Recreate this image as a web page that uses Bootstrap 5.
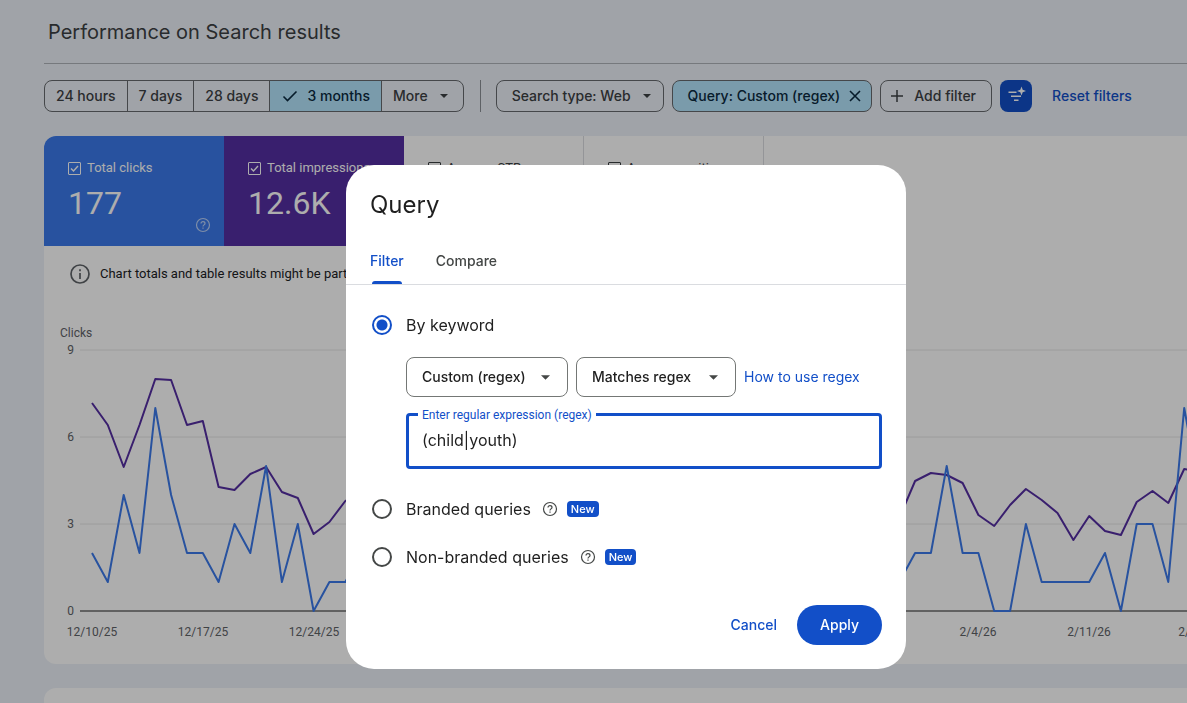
<!DOCTYPE html>
<html lang="en">
<head>
<meta charset="utf-8">
<meta name="viewport" content="width=device-width, initial-scale=1">
<title>Performance on Search results</title>
<link href="https://cdn.jsdelivr.net/npm/bootstrap@5.3.0/dist/css/bootstrap.min.css" rel="stylesheet">
<style>
  :root { --ink: #3c4043; --blue: #124fc8; --line: #66696d; }
  body { background: #ecf1f8; color: var(--ink); font-family: Inter, "Liberation Sans", sans-serif; font-size: 14px; line-height: 20px; overflow: hidden; }
  .page { padding-left: 44px; }
  .page-title { font-size: 20px; line-height: 28px; font-weight: 400; padding: 18px 4px 17px; border-bottom: 1px solid #aeb3b9; }
  .filters { padding: 16px 0 24px; }
  .chip { --bs-btn-color: var(--ink); --bs-btn-border-color: var(--line); --bs-btn-border-radius: 8px;
    --bs-btn-font-size: 14px; --bs-btn-font-weight: 500; --bs-btn-padding-y: 0; --bs-btn-padding-x: 15px;
    --bs-btn-active-bg: #b4e5fc; --bs-btn-active-color: #0b2a40; --bs-btn-active-border-color: var(--line);
    height: 32px; line-height: 20px; display: inline-flex; align-items: center; white-space: nowrap; }
  .ranges .chip { --bs-btn-padding-x: 11px; }
  .chip.has-menu { padding-right: 12px; }
  .chip.has-clear { padding-right: 7px; gap: 6px; }
  .chip.has-plus { padding-left: 7px; gap: 8px; }
  .caret { width: 0; border: 4px solid transparent; border-top-color: currentColor; border-bottom: 0; margin-left: 12px; }
  .vrule { width: 1px; height: 32px; background: #8b9096; margin: 0 15px 0 16px; }
  .smart { width: 32px; height: 32px; border-radius: 8px; background: var(--blue); color: #fff; }
  .blue-link { color: var(--blue); text-decoration: none; font-size: 14px; }
  .reset { font-weight: 500; margin-left: 12px; }
  .panel { background: #fff; border-radius: 12px 0 0 12px; overflow: hidden; }
  .panel, .metric { font-family: Roboto, "Liberation Sans", sans-serif; }
  .metric { width: 180px; height: 110px; padding: 22px 13px 12px 24px; border-right: 1px solid #dadce0; font-size: 13px; }
  .metric.clicks { background: #3b7aeb; color: #fff; border: 0; }
  .metric.impressions { background: #552ea2; color: #fff; border: 0; }
  .metric label { gap: 6px; white-space: nowrap; }
  .metric input { appearance: none; width: 13px; height: 13px; margin: 0; border: 1px solid currentColor; border-radius: 1px; color: inherit; }
  .metric input:checked { background: center/11px url("data:image/svg+xml,%3Csvg xmlns='http://www.w3.org/2000/svg' viewBox='0 0 11 11'%3E%3Cpath d='M2 5.5l2.5 2.5L9 3' fill='none' stroke='white' stroke-width='1.4'/%3E%3C/svg%3E"); }
  .figure-total { font-size: 32px; line-height: 40px; margin-top: 5px; }
  .metric .help { opacity: .65; margin-top: -6px; }
  .notice { padding: 16px 24px; gap: 8px; font-size: 13px; line-height: 24px; color: #202124; }
  .chart { display: block; width: 100%; height: 344px; margin-top: 18px; }
  .chart text { font-size: 12px; fill: #5f6368; }
  .chart polyline { fill: none; stroke-width: 2; stroke-linejoin: round; }
  .next-panel { height: 64px; margin-top: 24px; }

  .modal-backdrop { --bs-backdrop-opacity: .32; }
  .query-modal { padding: 165px 0 0 65px; color: #1f1f1f; }
  .query-modal .modal-dialog { --bs-modal-width: 560px; max-width: 560px; margin: 0 auto; }
  .query-modal .modal-content { border: 0; border-radius: 28px; padding-bottom: 24px; }
  .query-modal h2 { font-size: 24px; line-height: 32px; font-weight: 400; margin: 0; padding: 24px 24px 16px; }
  .tabs { border-bottom: 1px solid #dadce0; padding: 0 24px; gap: 32px; }
  .tabs button { background: none; border: 0; padding: 14px 0 10px; font-weight: 500; color: #444746; }
  .tabs button::after { content: ""; display: block; height: 3px; margin: 10px 2px -10px; border-radius: 3px 3px 0 0; }
  .tabs button.active { color: var(--blue); }
  .tabs button.active::after { background: var(--blue); }
  .choices { padding: 28px 24px 0 26px; font-size: 16px; line-height: 24px; }
  .choices .pick { appearance: none; width: 20px; height: 20px; margin: 0 14px 0 0; border: 2px solid #444746; border-radius: 50%; }
  .choices .pick:checked { border-color: var(--blue); background: radial-gradient(circle, var(--blue) 5px, #fff 6px); }
  .keyword { padding-left: 34px; }
  .picker { height: 40px; border: 1px solid #747775; border-radius: 8px; padding: 0 15px; font-size: 14px; line-height: 20px; font-weight: 500; color: #1f1f1f;
    background-position: right 17px center; background-size: 9px 5px;
    --bs-form-select-bg-img: url("data:image/svg+xml,%3Csvg xmlns='http://www.w3.org/2000/svg' viewBox='0 0 10 5'%3E%3Cpath d='M0 0h10L5 5z' fill='%23444746'/%3E%3C/svg%3E"); }
  .picker.subject { width: 162px; }
  .picker.rule { width: 160px; }
  .expression input { height: 56px; border: 3px solid var(--blue); border-radius: 4px; padding: 0 13px 2px; font-size: 16px; color: #1f1f1f; box-shadow: none; }
  .expression label { left: 12px; top: -8px; padding: 0 4px; background: #fff; color: var(--blue); font-family: Roboto, "Liberation Sans", sans-serif; font-size: 12px; line-height: 20px; }
  .tag-new { background: var(--blue); color: #fff; border-radius: 4px; font-size: 11px; line-height: 16px; font-weight: 500; padding: 0 4px; margin-left: 9px; }
  .query-modal .help { margin-left: 11px; color: #444746; }
  .actions { padding: 36px 24px 0; gap: 8px; }
  .actions button { height: 40px; border: 0; border-radius: 20px; font-weight: 500; color: var(--blue); background: none; padding: 0 12px; }
  .actions .apply { background: var(--blue); color: #fff; padding: 0 23px; }
</style>
</head>
<body>
<svg class="d-none">
  <symbol id="help" viewBox="0 0 16 16"><circle cx="8" cy="8" r="6.5" fill="none" stroke="currentColor" stroke-width="1.2"/><path d="M6 6.6C6 5.3 6.9 4.6 8 4.6s2 .7 2 1.8c0 1.4-2 1.6-2 3.1M8 10.4v1.3" fill="none" stroke="currentColor" stroke-width="1.2"/></symbol>
</svg>

<main class="page">
  <h1 class="page-title m-0">Performance on Search results</h1>

  <div class="filters d-flex align-items-center">
    <div class="btn-group ranges" role="group" aria-label="Date range">
      <button type="button" class="btn chip">24 hours</button>
      <button type="button" class="btn chip">7 days</button>
      <button type="button" class="btn chip">28 days</button>
      <button type="button" class="btn chip active"><svg class="me-2" width="18" height="18" viewBox="0 0 18 18" fill="none" stroke="currentColor" stroke-width="1.6"><path d="M2.5 9.5l4 4 9-9"/></svg>3 months</button>
      <button type="button" class="btn chip">More<span class="caret me-1"></span></button>
    </div>
    <span class="vrule"></span>
    <div class="d-flex align-items-center gap-2">
      <button type="button" class="btn chip has-menu">Search type: Web<span class="caret"></span></button>
      <button type="button" class="btn chip active has-clear">Query: Custom (regex)<svg width="18" height="18" viewBox="0 0 18 18" fill="none" stroke="currentColor" stroke-width="1.6"><path d="M4 4l10 10M14 4L4 14"/></svg></button>
      <button type="button" class="btn chip has-plus"><svg width="18" height="18" viewBox="0 0 18 18" fill="none" stroke="currentColor" stroke-width="1.5"><path d="M9 3v12M3 9h12"/></svg>Add filter</button>
      <button type="button" class="btn smart p-0 d-flex align-items-center justify-content-center" aria-label="Smart filters">
        <svg width="20" height="20" viewBox="0 0 20 20" fill="none" stroke="currentColor" stroke-width="1.6"><path d="M2.500 6.300h8M5 10.300h10M8 14.300h4.500"/><path d="M15.500 .5l1.200 3.300 3.300 1.200-3.300 1.200-1.200 3.300-1.200-3.300L11 5l3.300-1.200z" fill="currentColor" stroke="none"/></svg>
      </button>
      <a href="#" class="blue-link reset text-nowrap">Reset filters</a>
    </div>
  </div>

  <section class="panel">
    <div class="d-flex">
      <div class="metric clicks">
        <label class="d-flex align-items-center"><input type="checkbox" checked>Total clicks</label>
        <div class="figure-total">177</div>
        <svg class="help d-block ms-auto" width="16" height="16"><use href="#help"/></svg>
      </div>
      <div class="metric impressions">
        <label class="d-flex align-items-center"><input type="checkbox" checked>Total impressions</label>
        <div class="figure-total">12.6K</div>
      </div>
      <div class="metric"><label class="d-flex align-items-center"><input type="checkbox">Average CTR</label></div>
      <div class="metric"><label class="d-flex align-items-center"><input type="checkbox">Average position</label></div>
    </div>
    <div class="notice d-flex align-items-center">
      <svg width="24" height="24" viewBox="0 0 24 24" fill="none" stroke="#5f6368" stroke-width="1.7"><circle cx="12" cy="12" r="9"/><path d="M12 11v6M12 7.200v2"/></svg>
      Chart totals and table results might be partial
    </div>
    <svg class="chart" id="chart" role="img" aria-label="Clicks and impressions by day"></svg>
  </section>
  <section class="panel next-panel"></section>
</main>

<div class="modal-backdrop show"></div>
<div class="modal d-block query-modal" tabindex="-1" role="dialog" aria-labelledby="queryTitle">
  <div class="modal-dialog">
    <form class="modal-content">
      <h2 id="queryTitle">Query</h2>
      <div class="tabs d-flex" role="tablist">
        <button type="button" role="tab" class="active" aria-selected="true">Filter</button>
        <button type="button" role="tab" aria-selected="false">Compare</button>
      </div>
      <div class="choices">
        <div class="d-flex align-items-center"><input class="pick" type="radio" name="kind" id="byKeyword" checked><label for="byKeyword">By keyword</label></div>
        <div class="keyword">
          <div class="d-flex align-items-center gap-2 mt-3 pt-1">
            <select class="form-select picker subject" aria-label="Match type"><option>Custom (regex)</option></select>
            <select class="form-select picker rule" aria-label="Regex rule"><option>Matches regex</option></select>
            <a href="#" class="blue-link">How to use regex</a>
          </div>
          <div class="expression position-relative mt-3">
            <input class="form-control" id="expression" type="text" value="(child|youth)">
            <label class="position-absolute" for="expression">Enter regular expression (regex)</label>
          </div>
        </div>
        <div class="d-flex align-items-center mt-4 pt-1"><input class="pick" type="radio" name="kind" id="branded"><label for="branded">Branded queries</label><svg class="help" width="16" height="16"><use href="#help"/></svg><span class="tag-new">New</span></div>
        <div class="d-flex align-items-center mt-4"><input class="pick" type="radio" name="kind" id="nonBranded"><label for="nonBranded">Non-branded queries</label><svg class="help" width="16" height="16"><use href="#help"/></svg><span class="tag-new">New</span></div>
      </div>
      <div class="actions d-flex justify-content-end">
        <button type="button">Cancel</button>
        <button type="submit" class="apply">Apply</button>
      </div>
    </form>
  </div>
</div>

<script src="https://cdn.jsdelivr.net/npm/bootstrap@5.3.0/dist/js/bootstrap.bundle.min.js"></script>
<script>
  const clicks = [2,1,4,2,7,4,2,2,1,3,2,5,1,3,0,1,1,2,3,1,0,2,4,2,1,3,2,2,1,0,2,3,5,2,1,1,2,3,2,0,1,2,4,3,1,2,2,1,3,2,1,1,2,2,5,2,2,0,0,3,1,1,1,1,2,0,3,3,1,7,4];
  const impressions = [208,186,144,186,232,231,186,190,124,121,137,144,119,113,77,89,110,120,98,84,90,102,121,130,115,99,88,94,108,125,132,118,96,85,93,104,117,126,110,97,86,99,112,124,119,101,90,84,92,99,89,93,130,138,136,128,96,85,106,122,111,98,71,95,80,76,109,120,108,142,139];
  const left = 48, base = 291, unit = 29, week = 110.8, day = week / 7;
  const line = (data, scale, color) =>
    `<polyline stroke="${color}" points="${data.map((v, i) => Math.round((left + i * day) * 10) / 10 + "," + (base - v * scale)).join(" ")}"/>`;
  let out = `<text x="16" y="17">Clicks</text>`;
  for (const v of [9, 6, 3, 0]) {
    const y = base - v * unit;
    out += `<line x1="36" x2="100%" y1="${y}" y2="${y}" stroke="${v ? "#e6e6e6" : "#8f8f8f"}" stroke-width="${v ? 1 : 2}"/><text x="30" y="${y + 4}" text-anchor="end">${v}</text>`;
  }
  ["12/10/25","12/17/25","12/24/25","12/31/25","1/7/26","1/14/26","1/21/26","1/28/26","2/4/26","2/11/26","2/18/26"]
    .forEach((d, i) => out += `<text x="${left + Math.round(i * week)}" y="316" text-anchor="middle">${d}</text>`);
  out += line(impressions, 1, "#552ea2") + line(clicks, unit, "#3b7aeb");
  document.getElementById("chart").innerHTML = out;
</script>
</body>
</html>
